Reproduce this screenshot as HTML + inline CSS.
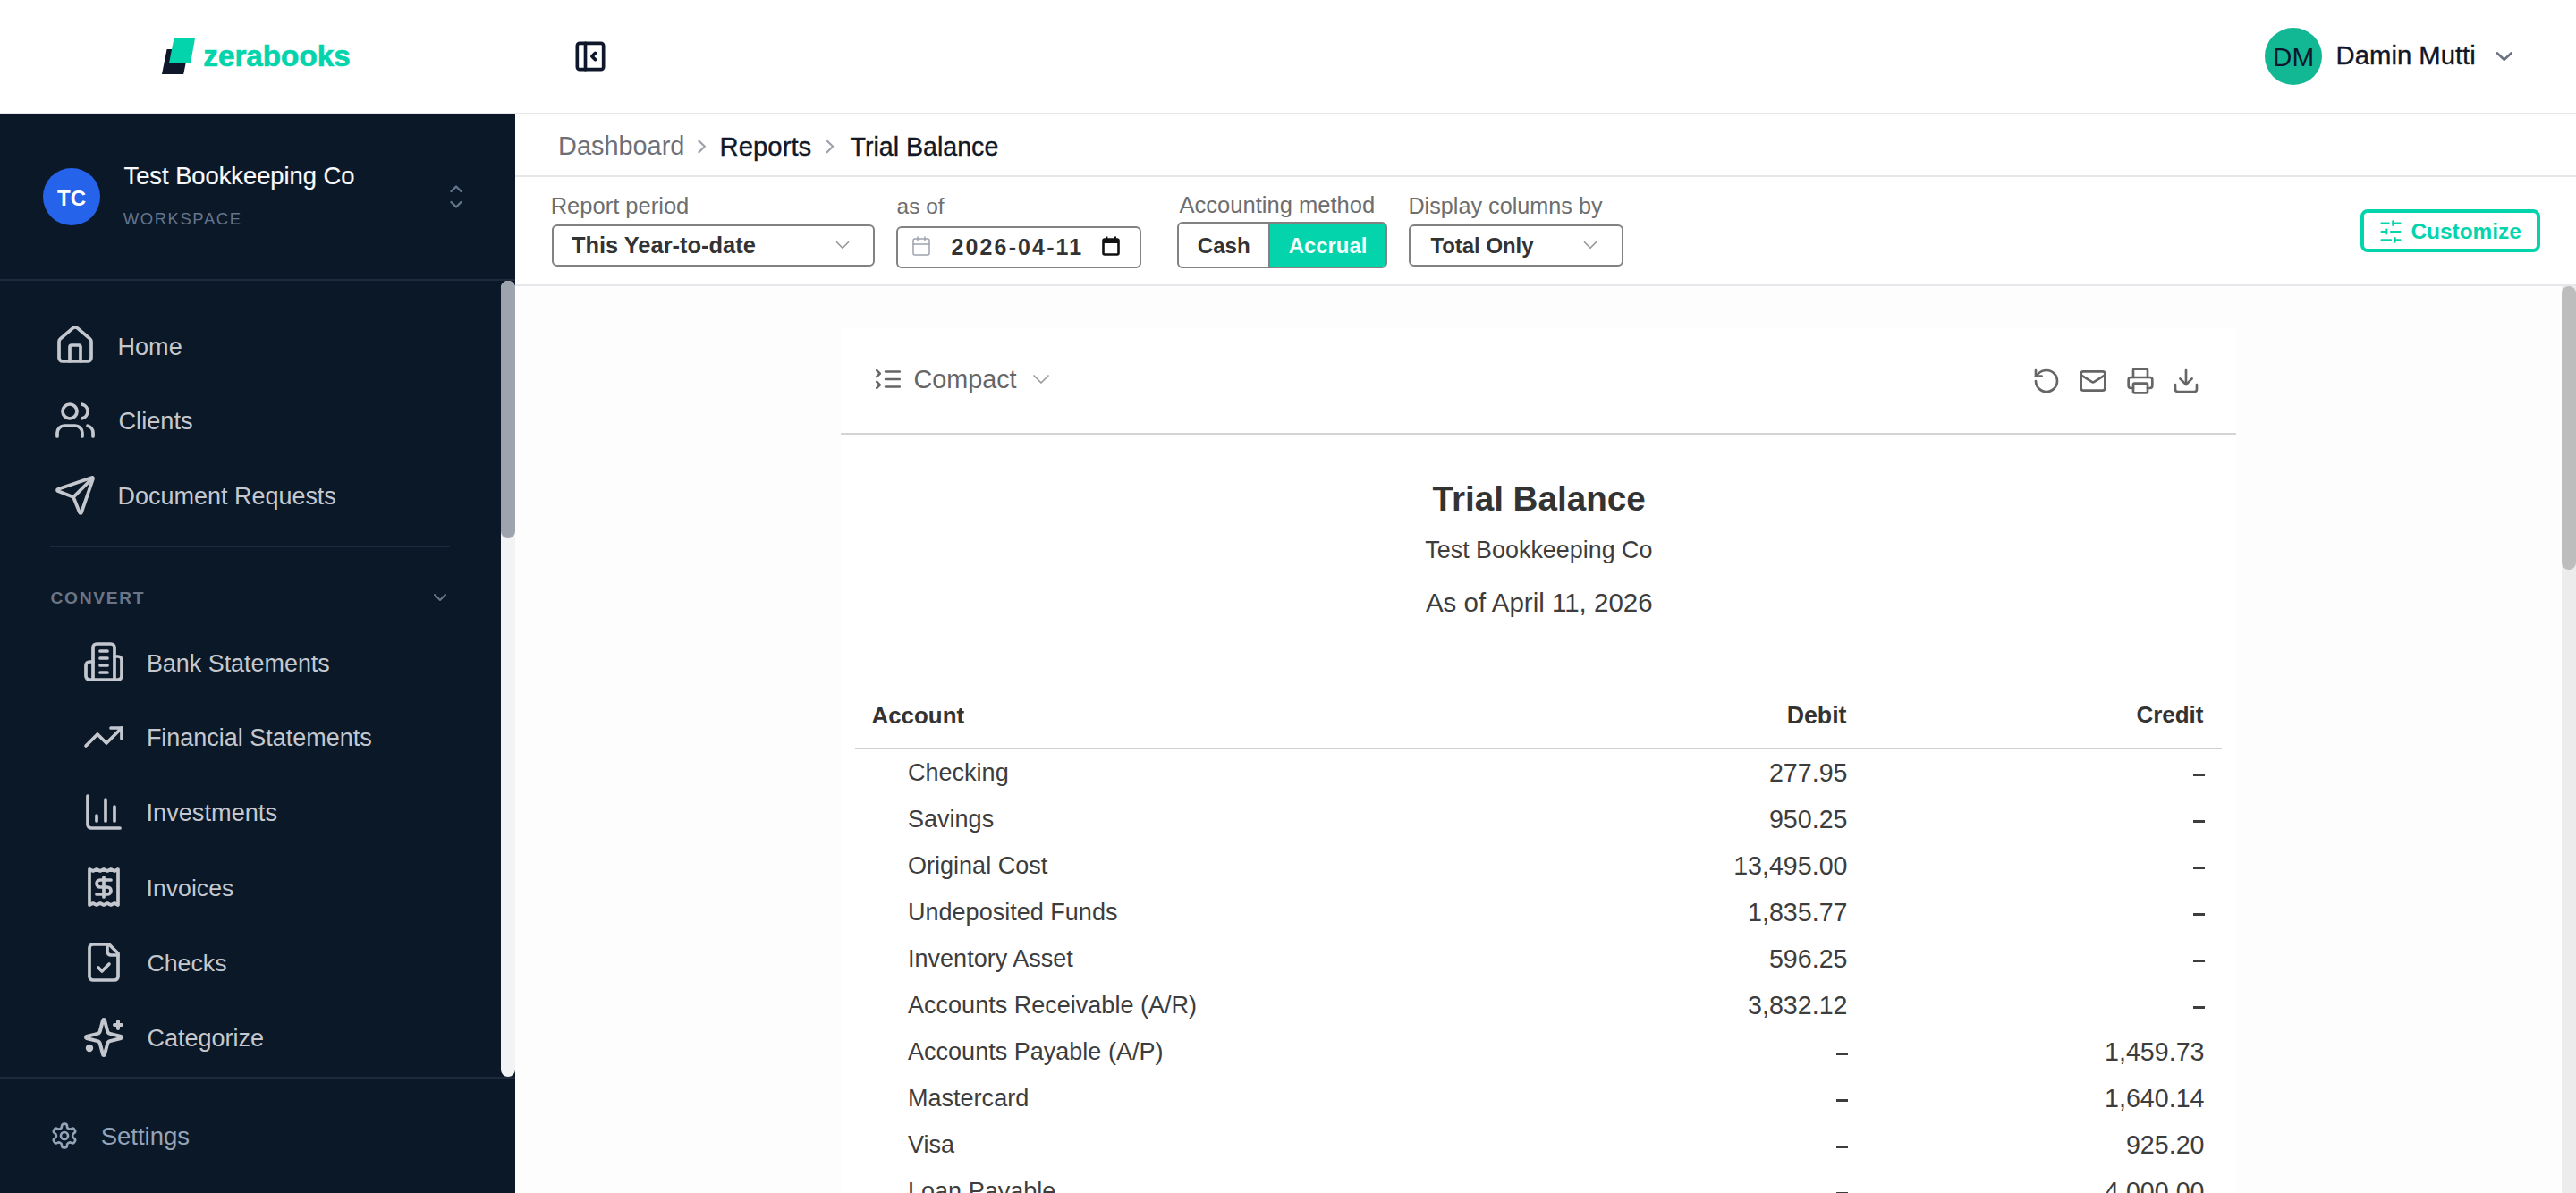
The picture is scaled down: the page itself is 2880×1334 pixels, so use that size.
<!DOCTYPE html>
<html><head><meta charset="utf-8"><title>Trial Balance</title>
<style>
html,body{margin:0;padding:0;}
body{width:2880px;height:1334px;overflow:hidden;position:relative;background:#fcfcfc;font-family:"Liberation Sans", sans-serif;}
.t{position:absolute;white-space:nowrap;line-height:1;}
.b{position:absolute;}
.ic{position:absolute;overflow:visible;}
@media (max-width:1600px){html{zoom:0.5;}}
</style></head><body>
<div class="b" style="left:0px;top:0px;width:2880px;height:126px;background:#fff;"></div>
<div class="b" style="left:0px;top:126px;width:2880px;height:2px;background:#e5e7eb;"></div>
<svg class="ic" style="left:0;top:0;width:400px;height:128px" viewBox="0 0 400 128"><polygon points="186.6,55 210.8,55 205.2,83 181,83" fill="#0f172a"/><polygon points="194.4,43 218,43 213,70.7 189,70.7" fill="#04d4ac"/></svg>
<div class="t" id="logo" style="top:46.05px;font-size:33.247px;color:#04d4ac;font-weight:700;left:227.30px;-webkit-text-stroke:0.7px #04d4ac;">zerabooks</div>
<svg class="ic" style="left:638.2px;top:40.8px;width:44px;height:44px;" viewBox="0 0 24 24" fill="none" color="#0f172a" stroke="#0f172a" stroke-width="2" stroke-linecap="round" stroke-linejoin="round"><rect x="4" y="4" width="16" height="16" rx="1.5"/><path d="M9 4v16"/><path d="M15 10l-2 2l2 2"/></svg>
<div class="b" style="left:2532px;top:31px;width:64px;height:64px;background:#12b894;border-radius:50%;"></div>
<div class="t" id="dm" style="top:49.00px;font-size:29.709px;color:#0f172a;font-weight:400;left:1564.20px;width:2000px;text-align:center;">DM</div>
<div class="t" id="user" style="top:47.89px;font-size:29.278px;color:#0f172a;font-weight:400;left:2611.60px;-webkit-text-stroke:0.35px #0f172a;">Damin Mutti</div>
<svg class="ic" style="left:2700px;top:0;width:180px;height:128px" viewBox="2700 0 180 128" fill="none" stroke="#6b7280" stroke-width="2.6" stroke-linecap="round" stroke-linejoin="round"><path d="M2791.8 59.3L2799.75 66.8L2807.7 59.3"/></svg>
<div class="b" style="left:0px;top:128px;width:576px;height:1206px;background:#0b1828;"></div>
<div class="b" style="left:48px;top:188px;width:64px;height:64px;background:#2563eb;border-radius:50%;"></div>
<div class="t" id="tc" style="top:209.88px;font-size:24.088px;color:#fff;font-weight:700;left:-919.90px;width:2000px;text-align:center;">TC</div>
<div class="t" id="ws" style="top:182.77px;font-size:27.300px;color:#f8fafc;font-weight:400;left:138.50px;-webkit-text-stroke:0.2px #f8fafc;">Test Bookkeeping Co</div>
<div class="t" id="wsl" style="top:235.95px;font-size:18.504px;color:#64748b;font-weight:400;letter-spacing:1.558px;left:137.70px;">WORKSPACE</div>
<svg class="ic" style="left:0;top:0;width:576px;height:300px" viewBox="0 0 576 300" fill="none" stroke="#64748b" stroke-width="2.4" stroke-linecap="round" stroke-linejoin="round"><path d="M504.5 214l5.5-5.5l5.5 5.5"/><path d="M504.5 226l5.5 5.5l5.5-5.5"/></svg>
<div class="b" style="left:0px;top:312px;width:576px;height:2px;background:#1e293b;"></div>
<svg class="ic" style="left:60px;top:361.5px;width:48px;height:48px;" viewBox="0 0 24 24" fill="none" color="#c4c8ce" stroke="#c4c8ce" stroke-width="1.85" stroke-linecap="round" stroke-linejoin="round"><path d="M15 21v-8a1 1 0 0 0-1-1h-4a1 1 0 0 0-1 1v8"/><path d="M3 10a2 2 0 0 1 .709-1.528l7-5.999a2 2 0 0 1 2.582 0l7 5.999A2 2 0 0 1 21 10v9a2 2 0 0 1-2 2H5a2 2 0 0 1-2-2z"/></svg>
<div class="t" id="n0" style="top:373.80px;font-size:27.087px;color:#c4c8ce;font-weight:400;left:131.50px;">Home</div>
<svg class="ic" style="left:60px;top:445.5px;width:48px;height:48px;" viewBox="0 0 24 24" fill="none" color="#c4c8ce" stroke="#c4c8ce" stroke-width="1.85" stroke-linecap="round" stroke-linejoin="round"><path d="M16 21v-2a4 4 0 0 0-4-4H6a4 4 0 0 0-4 4v2"/><circle cx="9" cy="7" r="4"/><path d="M22 21v-2a4 4 0 0 0-3-3.87"/><path d="M16 3.13a4 4 0 0 1 0 7.75"/></svg>
<div class="t" id="n1" style="top:457.40px;font-size:27.168px;color:#c4c8ce;font-weight:400;left:132.50px;">Clients</div>
<svg class="ic" style="left:60px;top:529.5px;width:48px;height:48px;" viewBox="0 0 24 24" fill="none" color="#c4c8ce" stroke="#c4c8ce" stroke-width="1.85" stroke-linecap="round" stroke-linejoin="round"><path d="M14.536 21.686a.5.5 0 0 0 .937-.024l6.5-19a.496.496 0 0 0-.635-.635l-19 6.5a.5.5 0 0 0-.024.937l7.93 3.18a2 2 0 0 1 1.112 1.11z"/><path d="m21.854 2.147-10.94 10.939"/></svg>
<div class="t" id="n2" style="top:541.99px;font-size:26.989px;color:#c4c8ce;font-weight:400;left:131.50px;">Document Requests</div>
<div class="b" style="left:56px;top:610px;width:447px;height:2px;background:#1e293b;"></div>
<div class="t" id="conv" style="top:658.98px;font-size:19.241px;color:#6b7585;font-weight:700;letter-spacing:1.677px;left:56.50px;">CONVERT</div>
<svg class="ic" style="left:480px;top:656px;width:24px;height:24px;" viewBox="0 0 24 24" fill="none" color="#6b7585" stroke="#6b7585" stroke-width="2" stroke-linecap="round" stroke-linejoin="round"><path d="m6 9 6 6 6-6"/></svg>
<svg class="ic" style="left:92px;top:716px;width:48px;height:48px;" viewBox="0 0 24 24" fill="none" color="#c4c8ce" stroke="#c4c8ce" stroke-width="1.85" stroke-linecap="round" stroke-linejoin="round"><path d="M6 22V4a2 2 0 0 1 2-2h8a2 2 0 0 1 2 2v18Z"/><path d="M6 12H4a2 2 0 0 0-2 2v6a2 2 0 0 0 2 2h2"/><path d="M18 9h2a2 2 0 0 1 2 2v9a2 2 0 0 1-2 2h-2"/><path d="M10 6h4"/><path d="M10 10h4"/><path d="M10 14h4"/><path d="M10 18h4"/></svg>
<div class="t" id="s0" style="top:728.69px;font-size:26.913px;color:#c4c8ce;font-weight:400;left:163.90px;">Bank Statements</div>
<svg class="ic" style="left:92px;top:800px;width:48px;height:48px;" viewBox="0 0 24 24" fill="none" color="#c4c8ce" stroke="#c4c8ce" stroke-width="1.85" stroke-linecap="round" stroke-linejoin="round"><polyline points="22 7 13.5 15.5 8.5 10.5 2 17"/><polyline points="16 7 22 7 22 13"/></svg>
<div class="t" id="s1" style="top:811.90px;font-size:26.970px;color:#c4c8ce;font-weight:400;left:163.90px;">Financial Statements</div>
<svg class="ic" style="left:92px;top:884px;width:48px;height:48px;" viewBox="0 0 24 24" fill="none" color="#c4c8ce" stroke="#c4c8ce" stroke-width="1.85" stroke-linecap="round" stroke-linejoin="round"><path d="M3 3v16a2 2 0 0 0 2 2h16"/><path d="M18 17V9"/><path d="M13 17V5"/><path d="M8 17v-3"/></svg>
<div class="t" id="s2" style="top:895.49px;font-size:27.189px;color:#c4c8ce;font-weight:400;left:163.50px;">Investments</div>
<svg class="ic" style="left:92px;top:968px;width:48px;height:48px;" viewBox="0 0 24 24" fill="none" color="#c4c8ce" stroke="#c4c8ce" stroke-width="1.85" stroke-linecap="round" stroke-linejoin="round"><path d="M4 2v20l2-1 2 1 2-1 2 1 2-1 2 1 2-1 2 1V2l-2 1-2-1-2 1-2-1-2 1-2-1-2 1Z"/><path d="M16 8h-6a2 2 0 1 0 0 4h4a2 2 0 1 1 0 4H8"/><path d="M12 17.5v-11"/></svg>
<div class="t" id="s3" style="top:979.70px;font-size:26.700px;color:#c4c8ce;font-weight:400;left:163.50px;">Invoices</div>
<svg class="ic" style="left:92px;top:1052px;width:48px;height:48px;" viewBox="0 0 24 24" fill="none" color="#c4c8ce" stroke="#c4c8ce" stroke-width="1.85" stroke-linecap="round" stroke-linejoin="round"><path d="M15 2H6a2 2 0 0 0-2 2v16a2 2 0 0 0 2 2h12a2 2 0 0 0 2-2V7Z"/><path d="M14 2v4a2 2 0 0 0 2 2h4"/><path d="m9 15 2 2 4-4"/></svg>
<div class="t" id="s4" style="top:1063.69px;font-size:26.700px;color:#c4c8ce;font-weight:400;left:164.50px;">Checks</div>
<svg class="ic" style="left:92px;top:1136px;width:48px;height:48px;" viewBox="0 0 24 24" fill="none" color="#c4c8ce" stroke="#c4c8ce" stroke-width="2.0" stroke-linecap="round" stroke-linejoin="round"><path d="M9.937 15.5A2 2 0 0 0 8.5 14.063l-6.135-1.582a.5.5 0 0 1 0-.962L8.5 9.936A2 2 0 0 0 9.937 8.5l1.582-6.135a.5.5 0 0 1 .963 0L14.063 8.5A2 2 0 0 0 15.5 9.937l6.135 1.581a.5.5 0 0 1 0 .964L15.5 14.063a2 2 0 0 0-1.437 1.437l-1.582 6.135a.5.5 0 0 1-.963 0z"/><path d="M20 3v4"/><path d="M22 5h-4"/><circle cx="4" cy="18" r="1.1" fill="currentColor"/></svg>
<div class="t" id="s5" style="top:1147.89px;font-size:26.978px;color:#c4c8ce;font-weight:400;left:164.50px;">Categorize</div>
<div class="b" style="left:560px;top:314px;width:16px;height:890px;background:#f1f3f5;border-radius:8px;"></div>
<div class="b" style="left:560px;top:314px;width:16px;height:288px;background:#9ea4ae;border-radius:8px;"></div>
<div class="b" style="left:0px;top:1204px;width:576px;height:2px;background:#1e293b;"></div>
<svg class="ic" style="left:56px;top:1254px;width:32px;height:32px;" viewBox="0 0 24 24" fill="none" color="#94a3b8" stroke="#94a3b8" stroke-width="2" stroke-linecap="round" stroke-linejoin="round"><path d="M12.22 2h-.44a2 2 0 0 0-2 2v.18a2 2 0 0 1-1 1.73l-.43.25a2 2 0 0 1-2 0l-.15-.08a2 2 0 0 0-2.73.73l-.22.38a2 2 0 0 0 .73 2.73l.15.1a2 2 0 0 1 1 1.72v.51a2 2 0 0 1-1 1.74l-.15.09a2 2 0 0 0-.73 2.73l.22.38a2 2 0 0 0 2.73.73l.15-.08a2 2 0 0 1 2 0l.43.25a2 2 0 0 1 1 1.73V20a2 2 0 0 0 2 2h.44a2 2 0 0 0 2-2v-.18a2 2 0 0 1 1-1.73l.43-.25a2 2 0 0 1 2 0l.15.08a2 2 0 0 0 2.73-.73l.22-.39a2 2 0 0 0-.73-2.73l-.15-.08a2 2 0 0 1-1-1.74v-.5a2 2 0 0 1 1-1.74l.15-.09a2 2 0 0 0 .73-2.73l-.22-.38a2 2 0 0 0-2.73-.73l-.15.08a2 2 0 0 1-2 0l-.43-.25a2 2 0 0 1-1-1.73V4a2 2 0 0 0-2-2z"/><circle cx="12" cy="12" r="3"/></svg>
<div class="t" id="set" style="top:1257.35px;font-size:27.513px;color:#94a3b8;font-weight:400;left:112.70px;">Settings</div>
<div class="b" style="left:576px;top:128px;width:2304px;height:68px;background:#fff;"></div>
<div class="b" style="left:576px;top:196px;width:2304px;height:2px;background:#e5e7eb;"></div>
<div class="t" id="bc0" style="top:149.47px;font-size:28.882px;color:#6e7079;font-weight:400;left:624.10px;">Dashboard</div>
<svg class="ic" style="left:0;top:0;width:1000px;height:200px" viewBox="0 0 1000 200" fill="none" stroke="#9ca0aa" stroke-width="2.2" stroke-linecap="round" stroke-linejoin="round"><path d="M781.3 157.5l6.6 6.3l-6.6 6.5"/><path d="M924.6 157.5l6.6 6.3l-6.6 6.5"/></svg>
<div class="t" id="bc1" style="top:149.11px;font-size:29.309px;color:#111827;font-weight:400;left:804.60px;-webkit-text-stroke:0.35px #111827;">Reports</div>
<div class="t" id="bc2" style="top:149.71px;font-size:28.600px;color:#111827;font-weight:400;left:950.50px;-webkit-text-stroke:0.35px #111827;">Trial Balance</div>
<div class="b" style="left:576px;top:198px;width:2304px;height:120px;background:#fff;"></div>
<div class="b" style="left:576px;top:318px;width:2304px;height:2px;background:#e5e7eb;"></div>
<div class="t" id="l0" style="top:218.35px;font-size:25.535px;color:#6e6e6e;font-weight:400;left:615.70px;">Report period</div>
<div class="t" id="l1" style="top:218.51px;font-size:24.530px;color:#6e6e6e;font-weight:400;left:1002.50px;">as of</div>
<div class="t" id="l2" style="top:217.39px;font-size:25.567px;color:#6e6e6e;font-weight:400;left:1318.50px;">Accounting method</div>
<div class="t" id="l3" style="top:217.85px;font-size:25.212px;color:#6e6e6e;font-weight:400;left:1574.40px;">Display columns by</div>
<div class="b" style="left:617px;top:251px;width:361px;height:47px;border:2px solid #828282;border-radius:6px;background:#fff;box-sizing:border-box;"></div>
<div class="t" id="v0" style="top:261.79px;font-size:25.450px;color:#333;font-weight:700;left:638.90px;">This Year-to-date</div>
<svg class="ic" style="left:929px;top:261px;width:26px;height:26px;" viewBox="0 0 24 24" fill="none" color="#9a9a9a" stroke="#9a9a9a" stroke-width="1.6" stroke-linecap="round" stroke-linejoin="round"><path d="m6 9 6 6 6-6"/></svg>
<div class="b" style="left:1002px;top:252.5px;width:274px;height:47.5px;border:2px solid #828282;border-radius:6px;background:#fff;box-sizing:border-box;"></div>
<svg class="ic" style="left:1018px;top:262.5px;width:24px;height:24px;" viewBox="0 0 24 24" fill="none" color="#9ca3af" stroke="#9ca3af" stroke-width="1.5" stroke-linecap="round" stroke-linejoin="round"><path d="M8 2v4"/><path d="M16 2v4"/><rect width="18" height="18" x="3" y="4" rx="2"/><path d="M3 10h18"/></svg>
<div class="t" id="v1" style="top:264.38px;font-size:24.964px;color:#333;font-weight:700;letter-spacing:2.154px;left:1063.50px;">2026-04-11</div>
<svg class="ic" style="left:1231px;top:263px;width:22px;height:24px" viewBox="0 0 22 24"><rect x="2.5" y="4.5" width="17" height="17" rx="1.5" fill="none" stroke="#111" stroke-width="2.6"/><rect x="2" y="4" width="18" height="5" fill="#111"/><rect x="5" y="1.5" width="2.4" height="4" fill="#111"/><rect x="14.6" y="1.5" width="2.4" height="4" fill="#111"/></svg>
<div class="b" style="left:1316px;top:248px;width:235px;height:51.5px;border:2px solid #828282;border-radius:6px;background:#fff;box-sizing:border-box;overflow:hidden;"></div>
<div class="b" style="left:1420px;top:250px;width:129px;height:47.5px;background:#04d4ac;border-radius:0 4px 4px 0;"></div>
<div class="b" style="left:1418px;top:250px;width:2px;height:47.5px;background:#828282;"></div>
<div class="t" id="cash" style="top:262.91px;font-size:24.169px;color:#333;font-weight:700;left:1338.70px;">Cash</div>
<div class="t" id="accr" style="top:262.86px;font-size:23.852px;color:#f4fffc;font-weight:700;left:1440.80px;">Accrual</div>
<div class="b" style="left:1575px;top:250.5px;width:240px;height:47.0px;border:2px solid #828282;border-radius:6px;background:#fff;box-sizing:border-box;"></div>
<div class="t" id="v2" style="top:262.77px;font-size:23.936px;color:#333;font-weight:700;left:1599.40px;">Total Only</div>
<svg class="ic" style="left:1765px;top:261px;width:26px;height:26px;" viewBox="0 0 24 24" fill="none" color="#9a9a9a" stroke="#9a9a9a" stroke-width="1.6" stroke-linecap="round" stroke-linejoin="round"><path d="m6 9 6 6 6-6"/></svg>
<div class="b" style="left:2639px;top:234px;width:201px;height:48px;border:4px solid #04d4ac;border-radius:8px;box-sizing:border-box;background:#fff;"></div>
<svg class="ic" style="left:2659px;top:245px;width:28px;height:28px;" viewBox="0 0 24 24" fill="none" color="#04d4ac" stroke="#04d4ac" stroke-width="1.8" stroke-linecap="round" stroke-linejoin="round"><line x1="21" x2="14" y1="4" y2="4"/><line x1="10" x2="3" y1="4" y2="4"/><line x1="21" x2="12" y1="12" y2="12"/><line x1="8" x2="3" y1="12" y2="12"/><line x1="21" x2="16" y1="20" y2="20"/><line x1="12" x2="3" y1="20" y2="20"/><line x1="14" x2="14" y1="2" y2="6"/><line x1="8" x2="8" y1="10" y2="14"/><line x1="16" x2="16" y1="18" y2="22"/></svg>
<div class="t" id="cust" style="top:246.74px;font-size:24.400px;color:#04d4ac;font-weight:700;left:2695.50px;">Customize</div>
<div class="b" style="left:576px;top:320px;width:2288px;height:1014px;background:#fdfdfd;"></div>
<div class="b" style="left:2864px;top:320px;width:16px;height:1014px;background:#ececec;"></div>
<div class="b" style="left:2864px;top:320px;width:16px;height:317px;background:#bdbdbd;border-radius:8px;"></div>
<div class="b" style="left:940px;top:367px;width:1560px;height:967px;background:#fff;"></div>
<div class="b" style="left:940px;top:484px;width:1560px;height:2px;background:#d4d4d4;"></div>
<svg class="ic" style="left:975.6px;top:406.5px;width:34px;height:34px;" viewBox="0 0 24 24" fill="none" color="#666" stroke="#666" stroke-width="1.9" stroke-linecap="round" stroke-linejoin="round"><path d="m3 10 2.5-2.5L3 5"/><path d="m3 19 2.5-2.5L3 14"/><path d="M10 6h11"/><path d="M10 12h11"/><path d="M10 18h11"/></svg>
<div class="t" id="cmp" style="top:409.69px;font-size:28.752px;color:#666;font-weight:400;left:1021.50px;">Compact</div>
<svg class="ic" style="left:1148px;top:408px;width:32px;height:32px;" viewBox="0 0 24 24" fill="none" color="#9a9a9a" stroke="#9a9a9a" stroke-width="1.3" stroke-linecap="round" stroke-linejoin="round"><path d="m6 9 6 6 6-6"/></svg>
<svg class="ic" style="left:2272px;top:410px;width:32px;height:32px;" viewBox="0 0 24 24" fill="none" color="#666" stroke="#666" stroke-width="2" stroke-linecap="round" stroke-linejoin="round"><path d="M3 12a9 9 0 1 0 9-9 9.75 9.75 0 0 0-6.74 2.74L3 8"/><path d="M3 3v5h5"/></svg>
<svg class="ic" style="left:2324px;top:410px;width:32px;height:32px;" viewBox="0 0 24 24" fill="none" color="#666" stroke="#666" stroke-width="2" stroke-linecap="round" stroke-linejoin="round"><rect width="20" height="16" x="2" y="4" rx="2"/><path d="m22 7-8.97 5.7a1.94 1.94 0 0 1-2.06 0L2 7"/></svg>
<svg class="ic" style="left:2376.5px;top:410px;width:32px;height:32px;" viewBox="0 0 24 24" fill="none" color="#666" stroke="#666" stroke-width="2" stroke-linecap="round" stroke-linejoin="round"><path d="M6 18H4a2 2 0 0 1-2-2v-5a2 2 0 0 1 2-2h16a2 2 0 0 1 2 2v5a2 2 0 0 1-2 2h-2"/><path d="M6 9V3a1 1 0 0 1 1-1h10a1 1 0 0 1 1 1v6"/><rect x="6" y="14" width="12" height="8" rx="1"/></svg>
<svg class="ic" style="left:2428px;top:410px;width:32px;height:32px;" viewBox="0 0 24 24" fill="none" color="#666" stroke="#666" stroke-width="2" stroke-linecap="round" stroke-linejoin="round"><path d="M21 15v4a2 2 0 0 1-2 2H5a2 2 0 0 1-2-2v-4"/><polyline points="7 10 12 15 17 10"/><line x1="12" x2="12" y1="15" y2="3"/></svg>
<div class="t" id="rt" style="top:539.01px;font-size:38.637px;color:#333;font-weight:700;left:720.60px;width:2000px;text-align:center;">Trial Balance</div>
<div class="t" id="rc" style="top:601.56px;font-size:26.903px;color:#3d3d3d;font-weight:400;left:720.40px;width:2000px;text-align:center;">Test Bookkeeping Co</div>
<div class="t" id="rd" style="top:659.00px;font-size:29.534px;color:#3d3d3d;font-weight:400;left:720.80px;width:2000px;text-align:center;">As of April 11, 2026</div>
<div class="t" id="hA" style="top:788.13px;font-size:25.903px;color:#333;font-weight:700;left:974.50px;">Account</div>
<div class="t" id="hD" style="top:787.12px;font-size:26.754px;color:#333;font-weight:700;right:815.50px;">Debit</div>
<div class="t" id="hC" style="top:786.40px;font-size:26.000px;color:#333;font-weight:700;right:416.50px;">Credit</div>
<div class="b" style="left:956px;top:836px;width:1528px;height:2px;background:#d0d0d0;"></div>
<div class="t" id="r0n" style="top:851.39px;font-size:27.044px;color:#3d3d3d;font-weight:400;left:1015.00px;">Checking</div>
<div class="t" id="r0d" style="top:850.00px;font-size:28.630px;color:#3d3d3d;font-weight:400;right:814.50px;">277.95</div>
<div class="b" style="left:2452px;top:865.2px;width:13px;height:2.5px;background:#3d3d3d;"></div>
<div class="t" id="r0n" style="top:903.39px;font-size:27.044px;color:#3d3d3d;font-weight:400;left:1015.00px;">Savings</div>
<div class="t" id="r0d" style="top:902.00px;font-size:28.630px;color:#3d3d3d;font-weight:400;right:814.50px;">950.25</div>
<div class="b" style="left:2452px;top:917.2px;width:13px;height:2.5px;background:#3d3d3d;"></div>
<div class="t" id="r0n" style="top:955.39px;font-size:27.044px;color:#3d3d3d;font-weight:400;left:1015.00px;">Original Cost</div>
<div class="t" id="r0d" style="top:954.00px;font-size:28.630px;color:#3d3d3d;font-weight:400;right:814.50px;">13,495.00</div>
<div class="b" style="left:2452px;top:969.2px;width:13px;height:2.5px;background:#3d3d3d;"></div>
<div class="t" id="r0n" style="top:1007.39px;font-size:27.044px;color:#3d3d3d;font-weight:400;left:1015.00px;">Undeposited Funds</div>
<div class="t" id="r0d" style="top:1006.00px;font-size:28.630px;color:#3d3d3d;font-weight:400;right:814.50px;">1,835.77</div>
<div class="b" style="left:2452px;top:1021.2px;width:13px;height:2.5px;background:#3d3d3d;"></div>
<div class="t" id="r0n" style="top:1059.39px;font-size:27.044px;color:#3d3d3d;font-weight:400;left:1015.00px;">Inventory Asset</div>
<div class="t" id="r0d" style="top:1058.00px;font-size:28.630px;color:#3d3d3d;font-weight:400;right:814.50px;">596.25</div>
<div class="b" style="left:2452px;top:1073.2px;width:13px;height:2.5px;background:#3d3d3d;"></div>
<div class="t" id="r0n" style="top:1111.39px;font-size:27.044px;color:#3d3d3d;font-weight:400;left:1015.00px;">Accounts Receivable (A/R)</div>
<div class="t" id="r0d" style="top:1110.00px;font-size:28.630px;color:#3d3d3d;font-weight:400;right:814.50px;">3,832.12</div>
<div class="b" style="left:2452px;top:1125.2px;width:13px;height:2.5px;background:#3d3d3d;"></div>
<div class="t" id="r0n" style="top:1163.39px;font-size:27.044px;color:#3d3d3d;font-weight:400;left:1015.00px;">Accounts Payable (A/P)</div>
<div class="b" style="left:2052.5px;top:1177.2px;width:13.0px;height:2.5px;background:#3d3d3d;"></div>
<div class="t" id="r0d" style="top:1162.00px;font-size:28.630px;color:#3d3d3d;font-weight:400;right:415.50px;">1,459.73</div>
<div class="t" id="r0n" style="top:1215.39px;font-size:27.044px;color:#3d3d3d;font-weight:400;left:1015.00px;">Mastercard</div>
<div class="b" style="left:2052.5px;top:1229.2px;width:13.0px;height:2.5px;background:#3d3d3d;"></div>
<div class="t" id="r0d" style="top:1214.00px;font-size:28.630px;color:#3d3d3d;font-weight:400;right:415.50px;">1,640.14</div>
<div class="t" id="r0n" style="top:1267.39px;font-size:27.044px;color:#3d3d3d;font-weight:400;left:1015.00px;">Visa</div>
<div class="b" style="left:2052.5px;top:1281.2px;width:13.0px;height:2.5px;background:#3d3d3d;"></div>
<div class="t" id="r0d" style="top:1266.00px;font-size:28.630px;color:#3d3d3d;font-weight:400;right:415.50px;">925.20</div>
<div class="t" id="r0n" style="top:1319.39px;font-size:27.044px;color:#3d3d3d;font-weight:400;left:1015.00px;">Loan Payable</div>
<div class="b" style="left:2052.5px;top:1333.2px;width:13.0px;height:2.5px;background:#3d3d3d;"></div>
<div class="t" id="r0d" style="top:1318.00px;font-size:28.630px;color:#3d3d3d;font-weight:400;right:415.50px;">4,000.00</div>

</body></html>
